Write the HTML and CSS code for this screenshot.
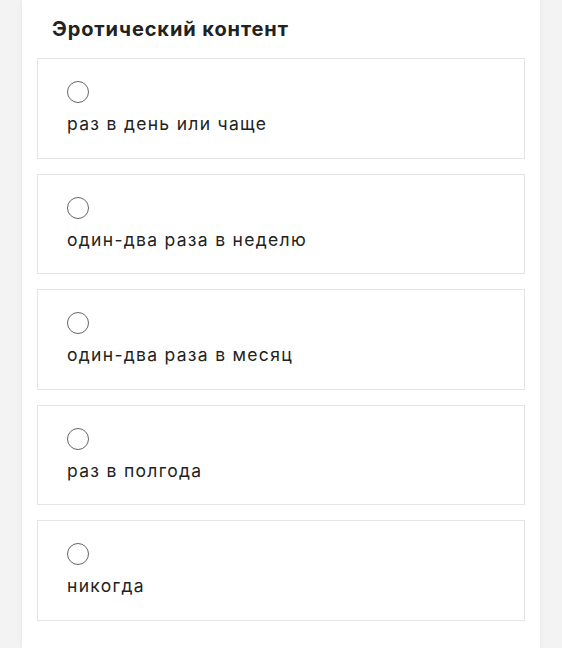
FILE: index.html
```html
<!DOCTYPE html>
<html lang="ru">
  <head>
    <meta charset="utf-8">
    <link rel="stylesheet" href="styles.css">
    <title>Эротический контент</title>
  </head>
  <body>
    <div class="panel">
      <h2 class="question">Эротический контент</h2>

      <label class="option">
        <span class="radio"></span>
        <span class="text">раз в день или чаще</span>
      </label>
      <label class="option">
        <span class="radio"></span>
        <span class="text">один-два раза в неделю</span>
      </label>
      <label class="option">
        <span class="radio"></span>
        <span class="text">один-два раза в месяц</span>
      </label>
      <label class="option">
        <span class="radio"></span>
        <span class="text">раз в полгода</span>
      </label>
      <label class="option">
        <span class="radio"></span>
        <span class="text">никогда</span>
      </label>
    </div>
  </body>
</html>
```

FILE: styles.css
```css
body {
  margin: 0;
  background-color: #f3f3f3;
  font-family: Inter, "Open Sans", sans-serif;
  color: #222;
}

.panel {
  margin-left: 22px;
  width: 488px;
  min-height: 648px;
  padding: 0 15px;
  background-color: #fff;
  box-shadow: 0 0 6px rgba(0, 0, 0, 0.06);
}

.question {
  margin: 0;
  padding: 18px 0 17px 15px;
  font-size: 20px;
  line-height: 23px;
  font-weight: 700;
  letter-spacing: 0.9px;
  color: #222;
}

.option {
  display: block;
  height: 100.5px;
  box-sizing: border-box;
  margin-bottom: 15px;
  padding: 22px 29px 0;
  border: 1px solid #e4e4e4;
}

.radio {
  display: block;
  width: 22px;
  height: 22px;
  box-sizing: border-box;
  border: 1.5px solid #666;
  border-radius: 50%;
  margin-bottom: 9px;
}

.text {
  display: block;
  font-size: 17.5px;
  line-height: 24px;
  letter-spacing: 1.3px;
  color: #222;
}
```
